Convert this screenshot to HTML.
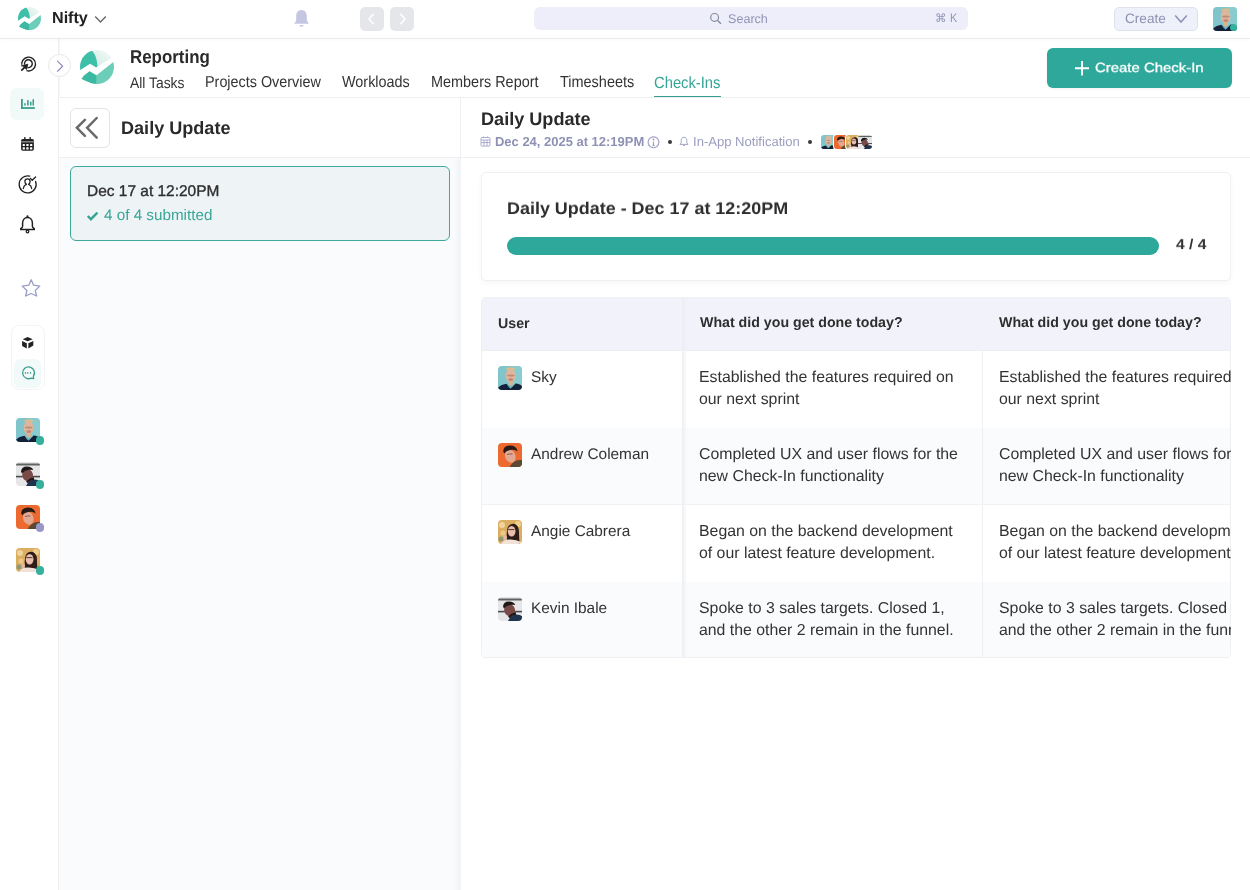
<!DOCTYPE html>
<html><head><meta charset="utf-8"><title>Check-Ins</title>
<style>
html,body{margin:0;padding:0;width:1250px;height:890px;overflow:hidden;background:#fff;}
body{position:relative;font-family:"Liberation Sans",sans-serif;}
.t{position:absolute;white-space:nowrap;will-change:transform;text-rendering:geometricPrecision;}
</style></head><body>
<div style="position:absolute;left:0;top:0;width:1250px;height:38px;background:#fff"></div>
<svg viewBox="0 0 34 34" width="23" height="23" style="position:absolute;left:18px;top:7px">
<defs><clipPath id="ca"><circle cx="17" cy="17" r="17"/></clipPath>
<linearGradient id="ga" x1="0" y1="1" x2="1" y2="0"><stop offset="0" stop-color="#cdebe3"/><stop offset="0.6" stop-color="#eaf6f3"/><stop offset="1" stop-color="#f6fbfa"/></linearGradient></defs>
<g clip-path="url(#ca)">
<rect width="34" height="34" fill="#fff"/>
<path d="M12.2 0.6 L16.6 17 L36 5.2 L36 -2 Z" fill="url(#ga)"/>
<path d="M-2 21.5 L10.1 13.8 L15.8 17.2 Q17.6 17.6 17.4 15.2 Q16.8 5 11.4 0.2 L-2 -2 Z" fill="#3dbfa8"/>
<path d="M-2 30.2 L9.6 21.2 L16.5 25.2 L17.8 26 L17.8 36 L-2 36 Z" fill="#3bb9a2"/>
<path d="M16.5 25.2 L36 10 L36 36 L16 36 Z" fill="#6ccdb9"/>
</g><path d="M1.2 28.8 L9.6 21.2 L13 33.5 L12 33.2 Q6 31.6 1.2 28.8 Z" fill="#3bb9a2"/></svg>
<div class="t" style="left:52.10px;top:8.56px;font-size:16.13px;line-height:19px;font-weight:700;color:#222;">Nifty</div>
<svg style="position:absolute;left:94px;top:15px" width="13" height="9" viewBox="0 0 13 9"><path d="M1.2 1.5 L6.5 7 L11.8 1.5" fill="none" stroke="#666" stroke-width="1.3"/></svg>
<svg style="position:absolute;left:293px;top:9px" width="17" height="19" viewBox="0 0 17 19"><path d="M8.5 1 C5 1 3.2 3.8 3.2 7 L3.2 11.5 L1.2 14.8 L15.8 14.8 L13.8 11.5 L13.8 7 C13.8 3.8 12 1 8.5 1 Z" fill="#c5c7e2"/><rect x="6.5" y="16" width="4" height="1.6" rx="0.8" fill="#c5c7e2"/></svg>
<div style="position:absolute;left:360px;top:7px;width:24px;height:24px;border-radius:5px;background:#e5e6ea"></div>
<div style="position:absolute;left:390px;top:7px;width:24px;height:24px;border-radius:5px;background:#e5e6ea"></div>
<svg style="position:absolute;left:360px;top:7px" width="24" height="24" viewBox="0 0 24 24"><path d="M13.8 6.8 L9 12 L13.8 17.2" fill="none" stroke="#fff" stroke-width="1.6"/></svg>
<svg style="position:absolute;left:390px;top:7px" width="24" height="24" viewBox="0 0 24 24"><path d="M10.2 6.8 L15 12 L10.2 17.2" fill="none" stroke="#fff" stroke-width="1.6"/></svg>
<div style="position:absolute;left:534px;top:7px;width:434px;height:23px;border-radius:6px;background:#edeef9"></div>
<svg style="position:absolute;left:709px;top:12px" width="13" height="13" viewBox="0 0 13 13"><circle cx="5.6" cy="5.4" r="3.9" fill="none" stroke="#86889f" stroke-width="1.2"/><path d="M8.4 8.3 L11.9 11.8" stroke="#86889f" stroke-width="1.3"/></svg>
<div class="t" style="left:728.00px;top:12.09px;font-size:12.59px;line-height:15px;color:#9294b6;">Search</div>
<div class="t" style="left:935.20px;top:12.26px;font-size:11.50px;line-height:14px;color:#9294b6;">&#8984;</div>
<div class="t" style="left:949.60px;top:13.00px;font-size:10.83px;line-height:13px;color:#9294b6;transform:scaleY(1.150);transform-origin:0 10.25px;">K</div>
<div style="position:absolute;left:1114px;top:7px;width:82px;height:22px;border-radius:5px;background:#eef0fa;border:1px solid #dfe1ee"></div>
<div class="t" style="left:1125.20px;top:11.03px;font-size:13.60px;line-height:16px;color:#8f91b3;">Create</div>
<svg style="position:absolute;left:1174px;top:14px" width="14" height="10" viewBox="0 0 14 10"><path d="M1.2 1.5 L7 8 L12.8 1.5" fill="none" stroke="#8f91b3" stroke-width="1.5"/></svg>
<svg style="position:absolute;left:1213px;top:7px" width="24" height="24" viewBox="0 0 24 24"><defs><clipPath id="av1213_7"><rect width="24" height="24" rx="4.00"/></clipPath></defs><g clip-path="url(#av1213_7)"><rect width="24" height="24" fill="#7fc5cb"/><rect x="14" width="10" height="24" fill="#8fd0d4" opacity="0.6"/><ellipse cx="12.6" cy="2.8" rx="4.5" ry="1.6" fill="#d9bc8e"/><ellipse cx="12.6" cy="9.8" rx="4.9" ry="6.8" fill="#dfb59c"/><ellipse cx="12.8" cy="9.4" rx="3.8" ry="1" fill="#b98e78"/><ellipse cx="12.8" cy="13.6" rx="2.6" ry="1.5" fill="#c9877a"/><rect x="10.6" y="15.5" width="4.2" height="4" fill="#d6b48f"/><path d="M0 24 L0 21.5 Q3 18.6 8.5 17.8 L12.6 22.5 L17.5 17.6 Q22.5 18 24 20.5 L24 24 Z" fill="#13203a"/><path d="M8.5 17.8 L11 21.5 L12.6 22.5 L14 21.2 L17.5 17.6 L15.5 18.8 L12.6 21 L10 18.8 Z" fill="#5aa7b5"/></g></svg>
<div style="position:absolute;left:1230.0px;top:24.0px;width:7px;height:7px;border-radius:50%;background:#35b09c"></div>
<div style="position:absolute;left:0;top:38px;width:58px;height:852px;background:#fff;border-right:1px solid #eeeef1"></div>
<div style="position:absolute;left:59px;top:38px;width:1px;height:852px;background:#f7f7f9"></div>
<svg style="position:absolute;left:16px;top:52px" width="24" height="24" viewBox="0 0 24 24" fill="none" stroke="#222" stroke-width="1.4"><path d="M6.2 14.6 A6.9 6.9 0 1 1 10.5 18.6"/><path d="M8.6 12.6 A3.9 3.9 0 1 1 11.6 15.5"/><path d="M5.3 18.6 L9.5 14.4" stroke-width="1.8"/><path d="M11.8 12.2 L6.4 13.6 L10.6 17.6 Z" fill="#222" stroke-width="0.8"/></svg>
<div style="position:absolute;left:10px;top:88px;width:34px;height:32px;border-radius:7px;background:#f1faf8"></div>
<svg style="position:absolute;left:16px;top:92px" width="24" height="24" viewBox="0 0 24 24" fill="#3a9c8c"><rect x="5" y="7" width="1.8" height="9.9"/><rect x="5" y="15.1" width="13.9" height="1.8"/><rect x="8.2" y="11.1" width="1.5" height="2.7" rx="0.7"/><rect x="11.1" y="8.1" width="1.6" height="5.7" rx="0.7"/><rect x="14" y="9.4" width="1.5" height="4.4" rx="0.7"/><rect x="16.5" y="7.1" width="1.5" height="6.7" rx="0.7"/></svg>
<svg style="position:absolute;left:16px;top:132px" width="24" height="24" viewBox="0 0 24 24"><rect x="5.1" y="6.9" width="12.8" height="11.8" rx="1.6" fill="#222"/><rect x="5.1" y="9.1" width="12.8" height="1.4" fill="#8a8a8a"/><rect x="8.1" y="5" width="1.4" height="2.6" rx="0.6" fill="#222"/><rect x="13.5" y="5" width="1.4" height="2.6" rx="0.6" fill="#222"/><g fill="#fff"><rect x="6.7" y="11.9" width="2.2" height="2.2" rx="0.5"/><rect x="10.3" y="11.9" width="2.3" height="2.2" rx="0.5"/><rect x="14" y="11.9" width="2.3" height="2.2" rx="0.5"/><rect x="6.7" y="15.3" width="2.2" height="2.1" rx="0.5"/><rect x="10.3" y="15.3" width="2.3" height="2.1" rx="0.5"/><rect x="14" y="15.3" width="2.3" height="2.1" rx="0.5"/></g></svg>
<svg style="position:absolute;left:16px;top:172px" width="24" height="24" viewBox="0 0 24 24" fill="none" stroke="#222" stroke-width="1.3" stroke-linecap="round"><path d="M13.8 4.2 A8.5 8.5 0 1 0 19.6 9.4"/><path d="M14.4 6.4 L16.2 8.3 L19.6 5"/><path d="M10.3 12.3 Q8.9 11.4 8.9 9.5 A2.6 2.6 0 0 1 14.1 9.5 Q14.1 11.4 12.7 12.3"/><path d="M7.3 16.5 Q7.7 13.3 10.3 12.3 M15.7 16.5 Q15.3 13.3 12.7 12.3"/></svg>
<svg style="position:absolute;left:16px;top:212px" width="24" height="24" viewBox="0 0 24 24" fill="none" stroke="#222" stroke-width="1.5" stroke-linejoin="round"><path d="M11.5 5.5 C8.4 5.5 6.6 8 6.6 11 L6.6 14.2 Q6.6 15.6 5.2 16.2 Q4.5 16.6 4.7 17.5 L18.3 17.5 Q18.5 16.6 17.8 16.2 Q16.4 15.6 16.4 14.2 L16.4 11 C16.4 8 14.6 5.5 11.5 5.5 Z"/><circle cx="11.5" cy="19.5" r="1.3" stroke-width="1.3"/><circle cx="11.5" cy="4.4" r="1.1" fill="#222" stroke="none"/></svg>
<svg style="position:absolute;left:18px;top:276px" width="24" height="24" viewBox="0 0 24 24" fill="none" stroke="#9a9cc6" stroke-width="1.3" stroke-linejoin="round"><path d="M13.2 3.8 L15.6 9.2 L21.8 10.1 L17.3 14.4 L18.6 20 L13.2 17.5 L7.6 20 L8.9 14.5 L4.2 10.1 L10.8 9.2 Z"/></svg>
<div style="position:absolute;left:11px;top:325px;width:32px;height:63px;border-radius:8px;border:1px solid #f3f4f5;background:#fff"></div>
<div style="position:absolute;left:14px;top:359px;width:27px;height:29px;border-radius:6px;background:#f1faf8"></div>
<svg style="position:absolute;left:16px;top:330px" width="24" height="24" viewBox="0 0 24 24" fill="#222"><path d="M6.7 9.2 L11.6 7.1 L16.7 9.3 L11.6 11.3 Z"/><path d="M6.1 11.1 L10.8 13.2 L10.8 18.6 L6.1 15.9 Z"/><path d="M12.4 13.2 L17.3 11.1 L17.3 15.6 L12.4 18.6 Z"/></svg>
<svg style="position:absolute;left:16px;top:361px" width="24" height="24" viewBox="0 0 24 24" fill="none" stroke="#3a9c8c" stroke-width="1.3"><path d="M17.4 15.2 A5.9 5.9 0 1 0 15.2 17.1 L17.6 17.6 Z" stroke-linejoin="round"/><g fill="#3a9c8c" stroke="none"><rect x="8.9" y="11.1" width="1.2" height="1.6"/><rect x="11.2" y="11.1" width="1.2" height="1.6"/><rect x="13.9" y="11.1" width="1.2" height="1.6"/></g></svg>
<svg style="position:absolute;left:16px;top:418px" width="24" height="24" viewBox="0 0 24 24"><defs><clipPath id="av16_418"><rect width="24" height="24" rx="4.00"/></clipPath></defs><g clip-path="url(#av16_418)"><rect width="24" height="24" fill="#7fc5cb"/><rect x="14" width="10" height="24" fill="#8fd0d4" opacity="0.6"/><ellipse cx="12.6" cy="2.8" rx="4.5" ry="1.6" fill="#d9bc8e"/><ellipse cx="12.6" cy="9.8" rx="4.9" ry="6.8" fill="#dfb59c"/><ellipse cx="12.8" cy="9.4" rx="3.8" ry="1" fill="#b98e78"/><ellipse cx="12.8" cy="13.6" rx="2.6" ry="1.5" fill="#c9877a"/><rect x="10.6" y="15.5" width="4.2" height="4" fill="#d6b48f"/><path d="M0 24 L0 21.5 Q3 18.6 8.5 17.8 L12.6 22.5 L17.5 17.6 Q22.5 18 24 20.5 L24 24 Z" fill="#13203a"/><path d="M8.5 17.8 L11 21.5 L12.6 22.5 L14 21.2 L17.5 17.6 L15.5 18.8 L12.6 21 L10 18.8 Z" fill="#5aa7b5"/></g></svg>
<div style="position:absolute;left:35.8px;top:436.3px;width:8.4px;height:8.4px;border-radius:50%;background:#35b09c"></div>
<svg style="position:absolute;left:16px;top:462px" width="24" height="24" viewBox="0 0 24 24"><defs><clipPath id="av16_462"><rect width="24" height="24" rx="4.00"/></clipPath></defs><g clip-path="url(#av16_462)"><rect width="24" height="24" fill="#e6e6e8"/><rect x="0" y="1.5" width="24" height="2" fill="#5e6460"/><rect x="0" y="13.8" width="24" height="1.6" fill="#4a4a4c"/><ellipse cx="11.6" cy="13.2" rx="5.4" ry="6" fill="#7a4a48" transform="rotate(-15 11.6 13.2)"/><path d="M5 9.6 Q5.6 4.5 11 4.6 Q16 4.8 17.2 8 Q13 7.2 9 9 Q7 10 6 11.5 Z" fill="#1e1818"/><path d="M10 24 Q13 18 18.5 17.5 Q24 17.8 25 21 L25 24 Z" fill="#1d3350"/><path d="M11 20.5 Q14 17 18 16.5" stroke="#201818" stroke-width="2.5" fill="none"/></g></svg>
<div style="position:absolute;left:35.8px;top:480.3px;width:8.4px;height:8.4px;border-radius:50%;background:#35b09c"></div>
<svg style="position:absolute;left:16px;top:505px" width="24" height="24" viewBox="0 0 24 24"><defs><clipPath id="av16_505"><rect width="24" height="24" rx="4.00"/></clipPath></defs><g clip-path="url(#av16_505)"><rect width="24" height="24" fill="#ec6a30"/><ellipse cx="12.3" cy="13.2" rx="5.2" ry="6.6" fill="#e3a892" transform="rotate(-20 12.3 13.2)"/><path d="M5.2 8.2 Q5.5 3 11.5 2.6 Q18.5 2.4 19.6 8.5 Q17 6.2 12.5 7 Q8 7.6 6.2 10.4 Z" fill="#2a1a16"/><path d="M11.5 24 Q14.5 19 19.5 17.2 Q23.5 16.5 25 17.5 L25 24 Z" fill="#5a4a33"/><path d="M9 11.6 Q11.5 10.6 14.5 11" stroke="#6b4a3e" stroke-width="0.8" fill="none"/></g></svg>
<div style="position:absolute;left:35.8px;top:523.3px;width:8.4px;height:8.4px;border-radius:50%;background:#9a97c8"></div>
<svg style="position:absolute;left:16px;top:548px" width="24" height="24" viewBox="0 0 24 24"><defs><clipPath id="av16_548"><rect width="24" height="24" rx="4.00"/></clipPath></defs><g clip-path="url(#av16_548)"><rect width="24" height="24" fill="#dcae62"/><circle cx="4" cy="5" r="3" fill="#f0d49a"/><circle cx="20" cy="4" r="3" fill="#efd08f"/><circle cx="5" cy="13" r="2.5" fill="#edc98a"/><circle cx="3" cy="19" r="2.5" fill="#8c9a7a"/><path d="M9 24 Q8 12 9.8 7 Q12.5 2.8 17 4 Q21.5 6 21 14 Q21 20 22 24 Z" fill="#2d1c17"/><ellipse cx="13.6" cy="11.2" rx="3.9" ry="5.2" fill="#e8bfae"/><path d="M10.2 9.6 H16.4" stroke="#3b2a25" stroke-width="0.9"/><path d="M3 24 Q5 19.5 11 19.5 Q18 19 23 22 L23 24 Z" fill="#f1e1d8"/><ellipse cx="7.2" cy="17.5" rx="1.8" ry="2.6" fill="#e2b8a4"/></g></svg>
<div style="position:absolute;left:35.8px;top:566.3px;width:8.4px;height:8.4px;border-radius:50%;background:#35b09c"></div>
<div style="position:absolute;left:60px;top:38px;width:1190px;height:59px;background:#fff;border-bottom:1px solid #eeeff1"></div>
<div style="position:absolute;left:48px;top:54px;width:23px;height:23px;border-radius:50%;background:#fff;border:1px solid #e8e8ec;box-sizing:border-box"></div>
<svg style="position:absolute;left:48px;top:54px" width="23" height="23" viewBox="0 0 23 23"><path d="M9.2 6.8 L14.6 12.2 L9.2 17.6" fill="none" stroke="#8884c0" stroke-width="1.2"/></svg>
<svg viewBox="0 0 34 34" width="34" height="34" style="position:absolute;left:80px;top:50px">
<defs><clipPath id="cb"><circle cx="17" cy="17" r="17"/></clipPath>
<linearGradient id="gb" x1="0" y1="1" x2="1" y2="0"><stop offset="0" stop-color="#cdebe3"/><stop offset="0.6" stop-color="#eaf6f3"/><stop offset="1" stop-color="#f6fbfa"/></linearGradient></defs>
<g clip-path="url(#cb)">
<rect width="34" height="34" fill="#fff"/>
<path d="M12.2 0.6 L16.6 17 L36 5.2 L36 -2 Z" fill="url(#gb)"/>
<path d="M-2 21.5 L10.1 13.8 L15.8 17.2 Q17.6 17.6 17.4 15.2 Q16.8 5 11.4 0.2 L-2 -2 Z" fill="#3dbfa8"/>
<path d="M-2 30.2 L9.6 21.2 L16.5 25.2 L17.8 26 L17.8 36 L-2 36 Z" fill="#3bb9a2"/>
<path d="M16.5 25.2 L36 10 L36 36 L16 36 Z" fill="#6ccdb9"/>
</g><path d="M1.2 28.8 L9.6 21.2 L13 33.5 L12 33.2 Q6 31.6 1.2 28.8 Z" fill="#3bb9a2"/></svg>
<div class="t" style="left:130.40px;top:48.09px;font-size:16.91px;line-height:20px;font-weight:700;color:#2a2a2a;transform:scaleY(1.100);transform-origin:0 15.86px;">Reporting</div>
<div class="t" style="left:129.60px;top:75.44px;font-size:13.89px;line-height:17px;color:#333;transform:scaleY(1.100);transform-origin:0 13.31px;">All Tasks</div>
<div class="t" style="left:205.00px;top:75.26px;font-size:14.39px;line-height:17px;color:#333;transform:scaleY(1.100);transform-origin:0 13.49px;">Projects Overview</div>
<div class="t" style="left:342.20px;top:75.25px;font-size:14.41px;line-height:17px;color:#333;transform:scaleY(1.100);transform-origin:0 13.50px;">Workloads</div>
<div class="t" style="left:430.80px;top:75.24px;font-size:14.44px;line-height:17px;color:#333;transform:scaleY(1.100);transform-origin:0 13.51px;">Members Report</div>
<div class="t" style="left:559.50px;top:75.23px;font-size:14.48px;line-height:17px;color:#333;transform:scaleY(1.100);transform-origin:0 13.52px;">Timesheets</div>
<div class="t" style="left:654.30px;top:74.63px;font-size:14.78px;line-height:18px;color:#35a596;transform:scaleY(1.100);transform-origin:0 14.12px;">Check-Ins</div>
<div style="position:absolute;left:654px;top:95.5px;width:67px;height:1.8px;background:#389e91"></div>
<div style="position:absolute;left:1047px;top:48px;width:185px;height:40px;border-radius:6px;background:#2ea89a;box-shadow:0 1px 3px rgba(0,0,0,0.06)"></div>
<svg style="position:absolute;left:1074px;top:60px" width="16" height="16" viewBox="0 0 16 16"><path d="M8 1 L8 15.6 M1 8.3 L15 8.3" stroke="#fff" stroke-width="1.9"/></svg>
<div class="t" style="left:1094.60px;top:59.37px;font-size:14.93px;line-height:18px;color:#fff;transform:scaleY(0.900);transform-origin:0 14.18px;-webkit-text-stroke:0.3px #fff;">Create Check-In</div>
<div style="position:absolute;left:59px;top:98px;width:402px;height:792px;background:#f9fbfd"></div>
<div style="position:absolute;left:454px;top:98px;width:7px;height:792px;background:linear-gradient(90deg,#f9fbfd,#f1f2f5)"></div>
<div style="position:absolute;left:59px;top:98px;width:402px;height:59px;background:#fff;border-bottom:1px solid #eeeff1"></div>
<div style="position:absolute;left:70px;top:108px;width:40px;height:40px;border-radius:6px;background:#fff;border:1px solid #e3e4e8;box-sizing:border-box"></div>
<svg style="position:absolute;left:70px;top:108px" width="40" height="40" viewBox="0 0 40 40" fill="none" stroke="#6a6a6a" stroke-width="2.5" stroke-linecap="round" stroke-linejoin="miter"><path d="M14.9 11.9 L6.9 19.8 L14.9 27.8"/><path d="M26.7 10 L17.1 19.8 L26.7 29.7"/></svg>
<div style="position:absolute;left:460px;top:98px;width:1px;height:59px;background:#eeeff1"></div>
<div class="t" style="left:120.50px;top:117.38px;font-size:18.08px;line-height:22px;font-weight:700;color:#2a2a2a;">Daily Update</div>
<div style="position:absolute;left:70px;top:166px;width:380px;height:75px;border-radius:6px;background:#eef4f6;border:1px solid #3fa99c;box-sizing:border-box"></div>
<div class="t" style="left:86.90px;top:181.78px;font-size:15.48px;line-height:19px;color:#2e2e2e;-webkit-text-stroke:0.35px #2e2e2e;">Dec 17 at 12:20PM</div>
<svg style="position:absolute;left:86px;top:210px" width="13" height="12" viewBox="0 0 13 12"><path d="M1.8 6 L4.9 9.2 L11.4 2.6" fill="none" stroke="#35a596" stroke-width="2.4"/></svg>
<div class="t" style="left:104.00px;top:207.47px;font-size:15.24px;line-height:18px;color:#3aa597;">4 of 4 submitted</div>
<div style="position:absolute;left:461px;top:98px;width:789px;height:59px;background:#fff;border-bottom:1px solid #eeeff1"></div>
<div class="t" style="left:481.20px;top:108.47px;font-size:18.10px;line-height:22px;font-weight:700;color:#2a2a2a;">Daily Update</div>
<svg style="position:absolute;left:480px;top:136px" width="11" height="11" viewBox="0 0 11 11" fill="none" stroke="#a3a5c9" stroke-width="0.9"><rect x="1" y="1.5" width="9" height="8.6" rx="1"/><path d="M1 4 H10 M1 6.6 H10 M4 4 V10 M7 4 V10 M3.5 0.5 V2 M7.5 0.5 V2"/></svg>
<div class="t" style="left:494.80px;top:134.05px;font-size:12.97px;line-height:16px;font-weight:700;color:#8f91b4;">Dec 24, 2025 at 12:19PM</div>
<svg style="position:absolute;left:647px;top:136px" width="13" height="13" viewBox="0 0 13 13" fill="none" stroke="#9b9dc2" stroke-width="1.1"><circle cx="6.5" cy="6.3" r="5.4"/><path d="M6.5 5.4 V9.4 M5.4 9.4 H7.6"/><circle cx="6.5" cy="3.5" r="0.4" fill="#9b9dc2"/></svg>
<div style="position:absolute;left:668px;top:140px;width:4px;height:4px;border-radius:50%;background:#3a3a3a"></div>
<svg style="position:absolute;left:679px;top:136px" width="10" height="11" viewBox="0 0 10 11" fill="none" stroke="#a3a5c9" stroke-width="1"><path d="M5 1.2 C3 1.2 2.2 2.8 2.2 4.5 L2.2 6.8 L1 8.4 L9 8.4 L7.8 6.8 L7.8 4.5 C7.8 2.8 7 1.2 5 1.2Z"/><path d="M4 9.4 H6"/></svg>
<div class="t" style="left:693.20px;top:134.22px;font-size:13.07px;line-height:16px;color:#9c9ebf;">In-App Notification</div>
<div style="position:absolute;left:808px;top:140px;width:4px;height:4px;border-radius:50%;background:#3a3a3a"></div>
<div style="position:absolute;left:820.0px;top:134px;width:16px;height:16px;border-radius:4px;background:#fff"></div>
<svg style="position:absolute;left:821px;top:135px" width="14" height="14" viewBox="0 0 24 24"><defs><clipPath id="av821_135"><rect width="24" height="24" rx="5.14"/></clipPath></defs><g clip-path="url(#av821_135)"><rect width="24" height="24" fill="#7fc5cb"/><rect x="14" width="10" height="24" fill="#8fd0d4" opacity="0.6"/><ellipse cx="12.6" cy="2.8" rx="4.5" ry="1.6" fill="#d9bc8e"/><ellipse cx="12.6" cy="9.8" rx="4.9" ry="6.8" fill="#dfb59c"/><ellipse cx="12.8" cy="9.4" rx="3.8" ry="1" fill="#b98e78"/><ellipse cx="12.8" cy="13.6" rx="2.6" ry="1.5" fill="#c9877a"/><rect x="10.6" y="15.5" width="4.2" height="4" fill="#d6b48f"/><path d="M0 24 L0 21.5 Q3 18.6 8.5 17.8 L12.6 22.5 L17.5 17.6 Q22.5 18 24 20.5 L24 24 Z" fill="#13203a"/><path d="M8.5 17.8 L11 21.5 L12.6 22.5 L14 21.2 L17.5 17.6 L15.5 18.8 L12.6 21 L10 18.8 Z" fill="#5aa7b5"/></g></svg>
<div style="position:absolute;left:832.5px;top:134px;width:16px;height:16px;border-radius:4px;background:#fff"></div>
<svg style="position:absolute;left:834px;top:135px" width="14" height="14" viewBox="0 0 24 24"><defs><clipPath id="av834_135"><rect width="24" height="24" rx="5.14"/></clipPath></defs><g clip-path="url(#av834_135)"><rect width="24" height="24" fill="#ec6a30"/><ellipse cx="12.3" cy="13.2" rx="5.2" ry="6.6" fill="#e3a892" transform="rotate(-20 12.3 13.2)"/><path d="M5.2 8.2 Q5.5 3 11.5 2.6 Q18.5 2.4 19.6 8.5 Q17 6.2 12.5 7 Q8 7.6 6.2 10.4 Z" fill="#2a1a16"/><path d="M11.5 24 Q14.5 19 19.5 17.2 Q23.5 16.5 25 17.5 L25 24 Z" fill="#5a4a33"/><path d="M9 11.6 Q11.5 10.6 14.5 11" stroke="#6b4a3e" stroke-width="0.8" fill="none"/></g></svg>
<div style="position:absolute;left:845.0px;top:134px;width:16px;height:16px;border-radius:4px;background:#fff"></div>
<svg style="position:absolute;left:846px;top:135px" width="14" height="14" viewBox="0 0 24 24"><defs><clipPath id="av846_135"><rect width="24" height="24" rx="5.14"/></clipPath></defs><g clip-path="url(#av846_135)"><rect width="24" height="24" fill="#dcae62"/><circle cx="4" cy="5" r="3" fill="#f0d49a"/><circle cx="20" cy="4" r="3" fill="#efd08f"/><circle cx="5" cy="13" r="2.5" fill="#edc98a"/><circle cx="3" cy="19" r="2.5" fill="#8c9a7a"/><path d="M9 24 Q8 12 9.8 7 Q12.5 2.8 17 4 Q21.5 6 21 14 Q21 20 22 24 Z" fill="#2d1c17"/><ellipse cx="13.6" cy="11.2" rx="3.9" ry="5.2" fill="#e8bfae"/><path d="M10.2 9.6 H16.4" stroke="#3b2a25" stroke-width="0.9"/><path d="M3 24 Q5 19.5 11 19.5 Q18 19 23 22 L23 24 Z" fill="#f1e1d8"/><ellipse cx="7.2" cy="17.5" rx="1.8" ry="2.6" fill="#e2b8a4"/></g></svg>
<div style="position:absolute;left:857.5px;top:134px;width:16px;height:16px;border-radius:4px;background:#fff"></div>
<svg style="position:absolute;left:858px;top:135px" width="14" height="14" viewBox="0 0 24 24"><defs><clipPath id="av858_135"><rect width="24" height="24" rx="5.14"/></clipPath></defs><g clip-path="url(#av858_135)"><rect width="24" height="24" fill="#e6e6e8"/><rect x="0" y="1.5" width="24" height="2" fill="#5e6460"/><rect x="0" y="13.8" width="24" height="1.6" fill="#4a4a4c"/><ellipse cx="11.6" cy="13.2" rx="5.4" ry="6" fill="#7a4a48" transform="rotate(-15 11.6 13.2)"/><path d="M5 9.6 Q5.6 4.5 11 4.6 Q16 4.8 17.2 8 Q13 7.2 9 9 Q7 10 6 11.5 Z" fill="#1e1818"/><path d="M10 24 Q13 18 18.5 17.5 Q24 17.8 25 21 L25 24 Z" fill="#1d3350"/><path d="M11 20.5 Q14 17 18 16.5" stroke="#201818" stroke-width="2.5" fill="none"/></g></svg>
<div style="position:absolute;left:481px;top:172px;width:750px;height:108.5px;border-radius:5px;background:#fff;border:1px solid #eff0f2;box-sizing:border-box;box-shadow:0 2px 6px rgba(30,40,60,0.035)"></div>
<div class="t" style="left:506.80px;top:197.43px;font-size:17.95px;line-height:22px;font-weight:700;color:#2e2e2e;transform:scaleY(0.950);transform-origin:0 17.22px;">Daily Update - Dec 17 at 12:20PM</div>
<div style="position:absolute;left:507px;top:237px;width:652px;height:18px;border-radius:9px;background:#2ea89a"></div>
<div class="t" style="left:1175.80px;top:235.33px;font-size:15.63px;line-height:19px;font-weight:700;color:#333;transform:scaleY(0.930);transform-origin:0 14.92px;">4 / 4</div>
<div style="position:absolute;left:481px;top:297px;width:750px;height:361px;border-radius:4px;overflow:hidden;border:1px solid #eff0f3;box-sizing:border-box;background:#fff"><div style="position:absolute;left:0;top:0;width:100%;height:52px;background:#f2f3fa;border-bottom:1px solid #eceef3"></div><div style="position:absolute;left:0;top:130px;width:100%;height:77px;background:#fafbfd;border-bottom:1px solid #f1f2f4;box-sizing:border-box"></div><div style="position:absolute;left:0;top:284px;width:100%;height:77px;background:#fafbfd"></div><div style="position:absolute;left:200px;top:0;width:5px;height:100%;background:linear-gradient(90deg,#eceef2,rgba(236,238,242,0))"></div><div style="position:absolute;left:500px;top:52px;width:1px;height:100%;background:#eff0f3"></div></div>
<div class="t" style="left:498.40px;top:315.53px;font-size:14.20px;line-height:17px;font-weight:700;color:#2e2e2e;">User</div>
<div class="t" style="left:700.00px;top:315.13px;font-size:14.20px;line-height:17px;font-weight:700;color:#2e2e2e;">What did you get done today?</div>
<div class="t" style="left:999.30px;top:315.13px;font-size:14.20px;line-height:17px;font-weight:700;color:#2e2e2e;">What did you get done today?</div>
<svg style="position:absolute;left:498px;top:366px" width="24" height="24" viewBox="0 0 24 24"><defs><clipPath id="av498_366"><rect width="24" height="24" rx="4.00"/></clipPath></defs><g clip-path="url(#av498_366)"><rect width="24" height="24" fill="#7fc5cb"/><rect x="14" width="10" height="24" fill="#8fd0d4" opacity="0.6"/><ellipse cx="12.6" cy="2.8" rx="4.5" ry="1.6" fill="#d9bc8e"/><ellipse cx="12.6" cy="9.8" rx="4.9" ry="6.8" fill="#dfb59c"/><ellipse cx="12.8" cy="9.4" rx="3.8" ry="1" fill="#b98e78"/><ellipse cx="12.8" cy="13.6" rx="2.6" ry="1.5" fill="#c9877a"/><rect x="10.6" y="15.5" width="4.2" height="4" fill="#d6b48f"/><path d="M0 24 L0 21.5 Q3 18.6 8.5 17.8 L12.6 22.5 L17.5 17.6 Q22.5 18 24 20.5 L24 24 Z" fill="#13203a"/><path d="M8.5 17.8 L11 21.5 L12.6 22.5 L14 21.2 L17.5 17.6 L15.5 18.8 L12.6 21 L10 18.8 Z" fill="#5aa7b5"/></g></svg>
<div class="t" style="left:530.70px;top:369.11px;font-size:15.40px;line-height:18px;color:#333;">Sky</div>
<div class="t" style="left:699.20px;top:368.35px;font-size:15.85px;line-height:19px;color:#333;">Established the features required on</div>
<div class="t" style="left:699.20px;top:389.65px;font-size:15.85px;line-height:19px;color:#333;">our next sprint</div>
<div style="position:absolute;left:999.2px;top:350px;width:231.8px;height:77px;overflow:hidden"><div class="t" style="left:0.00px;top:18.35px;font-size:15.85px;line-height:19px;color:#333;">Established the features required on</div><div class="t" style="left:0.00px;top:39.65px;font-size:15.85px;line-height:19px;color:#333;">our next sprint</div></div>
<svg style="position:absolute;left:498px;top:443px" width="24" height="24" viewBox="0 0 24 24"><defs><clipPath id="av498_443"><rect width="24" height="24" rx="4.00"/></clipPath></defs><g clip-path="url(#av498_443)"><rect width="24" height="24" fill="#ec6a30"/><ellipse cx="12.3" cy="13.2" rx="5.2" ry="6.6" fill="#e3a892" transform="rotate(-20 12.3 13.2)"/><path d="M5.2 8.2 Q5.5 3 11.5 2.6 Q18.5 2.4 19.6 8.5 Q17 6.2 12.5 7 Q8 7.6 6.2 10.4 Z" fill="#2a1a16"/><path d="M11.5 24 Q14.5 19 19.5 17.2 Q23.5 16.5 25 17.5 L25 24 Z" fill="#5a4a33"/><path d="M9 11.6 Q11.5 10.6 14.5 11" stroke="#6b4a3e" stroke-width="0.8" fill="none"/></g></svg>
<div class="t" style="left:530.70px;top:446.11px;font-size:15.40px;line-height:18px;color:#333;">Andrew Coleman</div>
<div class="t" style="left:699.20px;top:445.35px;font-size:15.85px;line-height:19px;color:#333;">Completed UX and user flows for the</div>
<div class="t" style="left:699.20px;top:466.65px;font-size:15.85px;line-height:19px;color:#333;">new Check-In functionality</div>
<div style="position:absolute;left:999.2px;top:427px;width:231.8px;height:77px;overflow:hidden"><div class="t" style="left:0.00px;top:18.35px;font-size:15.85px;line-height:19px;color:#333;">Completed UX and user flows for the</div><div class="t" style="left:0.00px;top:39.65px;font-size:15.85px;line-height:19px;color:#333;">new Check-In functionality</div></div>
<svg style="position:absolute;left:498px;top:520px" width="24" height="24" viewBox="0 0 24 24"><defs><clipPath id="av498_520"><rect width="24" height="24" rx="4.00"/></clipPath></defs><g clip-path="url(#av498_520)"><rect width="24" height="24" fill="#dcae62"/><circle cx="4" cy="5" r="3" fill="#f0d49a"/><circle cx="20" cy="4" r="3" fill="#efd08f"/><circle cx="5" cy="13" r="2.5" fill="#edc98a"/><circle cx="3" cy="19" r="2.5" fill="#8c9a7a"/><path d="M9 24 Q8 12 9.8 7 Q12.5 2.8 17 4 Q21.5 6 21 14 Q21 20 22 24 Z" fill="#2d1c17"/><ellipse cx="13.6" cy="11.2" rx="3.9" ry="5.2" fill="#e8bfae"/><path d="M10.2 9.6 H16.4" stroke="#3b2a25" stroke-width="0.9"/><path d="M3 24 Q5 19.5 11 19.5 Q18 19 23 22 L23 24 Z" fill="#f1e1d8"/><ellipse cx="7.2" cy="17.5" rx="1.8" ry="2.6" fill="#e2b8a4"/></g></svg>
<div class="t" style="left:530.70px;top:523.11px;font-size:15.40px;line-height:18px;color:#333;">Angie Cabrera</div>
<div class="t" style="left:699.20px;top:522.35px;font-size:15.85px;line-height:19px;color:#333;">Began on the backend development</div>
<div class="t" style="left:699.20px;top:543.65px;font-size:15.85px;line-height:19px;color:#333;">of our latest feature development.</div>
<div style="position:absolute;left:999.2px;top:504px;width:231.8px;height:77px;overflow:hidden"><div class="t" style="left:0.00px;top:18.35px;font-size:15.85px;line-height:19px;color:#333;">Began on the backend development</div><div class="t" style="left:0.00px;top:39.65px;font-size:15.85px;line-height:19px;color:#333;">of our latest feature development.</div></div>
<svg style="position:absolute;left:498px;top:597px" width="24" height="24" viewBox="0 0 24 24"><defs><clipPath id="av498_597"><rect width="24" height="24" rx="4.00"/></clipPath></defs><g clip-path="url(#av498_597)"><rect width="24" height="24" fill="#e6e6e8"/><rect x="0" y="1.5" width="24" height="2" fill="#5e6460"/><rect x="0" y="13.8" width="24" height="1.6" fill="#4a4a4c"/><ellipse cx="11.6" cy="13.2" rx="5.4" ry="6" fill="#7a4a48" transform="rotate(-15 11.6 13.2)"/><path d="M5 9.6 Q5.6 4.5 11 4.6 Q16 4.8 17.2 8 Q13 7.2 9 9 Q7 10 6 11.5 Z" fill="#1e1818"/><path d="M10 24 Q13 18 18.5 17.5 Q24 17.8 25 21 L25 24 Z" fill="#1d3350"/><path d="M11 20.5 Q14 17 18 16.5" stroke="#201818" stroke-width="2.5" fill="none"/></g></svg>
<div class="t" style="left:530.70px;top:600.11px;font-size:15.40px;line-height:18px;color:#333;">Kevin Ibale</div>
<div class="t" style="left:699.20px;top:599.35px;font-size:15.85px;line-height:19px;color:#333;">Spoke to 3 sales targets. Closed 1,</div>
<div class="t" style="left:699.20px;top:620.65px;font-size:15.85px;line-height:19px;color:#333;">and the other 2 remain in the funnel.</div>
<div style="position:absolute;left:999.2px;top:581px;width:231.8px;height:77px;overflow:hidden"><div class="t" style="left:0.00px;top:18.35px;font-size:15.85px;line-height:19px;color:#333;">Spoke to 3 sales targets. Closed 1,</div><div class="t" style="left:0.00px;top:39.65px;font-size:15.85px;line-height:19px;color:#333;">and the other 2 remain in the funnel.</div></div>
<div style="position:absolute;left:0;top:38px;width:1250px;height:1px;background:#ebebed;box-shadow:0 1px 3px rgba(0,0,0,0.05)"></div>
</body></html>
